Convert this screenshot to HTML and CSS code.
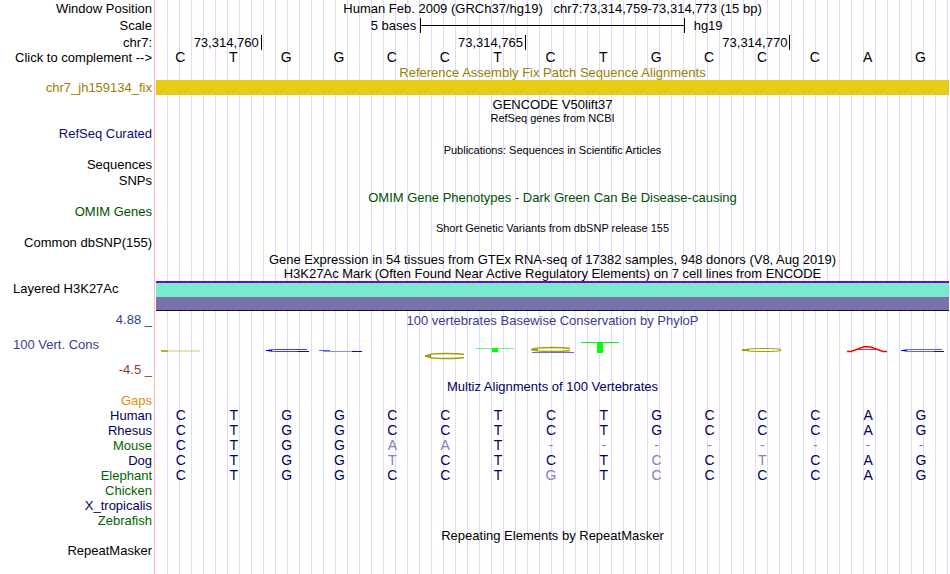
FILE: index.html
```html
<!DOCTYPE html>
<html lang="en">
<head>
    <meta charset="UTF-8">
    <meta name="viewport" content="width=device-width, initial-scale=1.0">
    <title>chr7:73,314,759-73,314,773</title>
    <link rel="stylesheet" href="styles.css">
</head>
<body>
    <main class="browser">
        <!-- Position and ruler -->
        <div class="row">
            <div class="label">Window Position</div>
            <div class="position">Human Feb. 2009 (GRCh37/hg19) &nbsp; chr7:73,314,759-73,314,773 (15 bp)</div>
        </div>
        <div class="row scale">
            <div class="label">Scale</div>
            <div class="bases">
                <span class="scale-size">5 bases</span>
                <span class="scale-bar"></span>
                <span class="scale-db">hg19</span>
            </div>
        </div>
        <div class="row">
            <div class="label">chr7:</div>
            <div class="bases">
                <span class="tick first">73,314,760</span>
                <span class="tick">73,314,765</span>
                <span class="tick">73,314,770</span>
            </div>
        </div>
        <div class="row short">
            <div class="label">Click to complement --&gt;</div>
            <div class="bases letters">
                <span>C</span><span>T</span><span>G</span><span>G</span><span>C</span><span>C</span><span>T</span><span>C</span><span>T</span><span>G</span><span>C</span><span>C</span><span>C</span><span>A</span><span>G</span>
            </div>
        </div>

        <!-- Fix patches -->
        <div class="row short patch"><div class="title">Reference Assembly Fix Patch Sequence Alignments</div></div>
        <div class="row short patch">
            <div class="label">chr7_jh159134_fix</div>
            <div class="patch-bar"></div>
        </div>

        <!-- Genes and publications -->
        <div class="row"><div class="title">GENCODE V50lift37</div></div>
        <div class="row short"><div class="title small">RefSeq genes from NCBI</div></div>
        <div class="row short refseq"><div class="label">RefSeq Curated</div></div>
        <div class="row"><div class="title small">Publications: Sequences in Scientific Articles</div></div>
        <div class="row short"><div class="label">Sequences</div></div>
        <div class="row"><div class="label">SNPs</div></div>
        <div class="row omim"><div class="title">OMIM Gene Phenotypes - Dark Green Can Be Disease-causing</div></div>
        <div class="row short omim"><div class="label">OMIM Genes</div></div>
        <div class="row"><div class="title small">Short Genetic Variants from dbSNP release 155</div></div>
        <div class="row short"><div class="label">Common dbSNP(155)</div></div>
        <div class="row"><div class="title">Gene Expression in 54 tissues from GTEx RNA-seq of 17382 samples, 948 donors (V8, Aug 2019)</div></div>

        <!-- H3K27Ac -->
        <div class="row short"><div class="title">H3K27Ac Mark (Often Found Near Active Regulatory Elements) on 7 cell lines from ENCODE</div></div>
        <div class="row signal">
            <div class="label left">Layered H3K27Ac</div>
            <div class="signal-bar"></div>
        </div>

        <!-- Conservation -->
        <div class="row phylop">
            <div class="axis">
                <span class="max">4.88 _</span>
                <span class="name">100 Vert. Cons</span>
                <span class="min">-4.5 _</span>
            </div>
            <div class="plot">
                <div class="title">100 vertebrates Basewise Conservation by PhyloP</div>
                <svg class="marks" viewBox="0 0 793 30" preserveAspectRatio="none" aria-hidden="true">
                    <!-- yellow -->
                    <g fill="none" stroke="#a0a000">
                        <path d="M5 16H44" stroke="#c8c864"/>
                        <path d="M5 16H12" stroke="#b4b432" stroke-width="2"/>
                        <path d="M308 19.5Q302 18.500 290 18.500Q271 18.500 271 21Q271 23.500 290 23.500Q302 23.500 308 22.500" stroke-width="1.500"/>
                        <path d="M269 21H275" stroke-width="2"/>
                        <path d="M414 13.500Q408 12.500 396 12.500Q377 12.500 377 14.500Q377 16.500 396 16.500Q408 16.500 414 15.500" stroke-width="1.500"/>
                        <path d="M375 14.500H382" stroke-width="2"/>
                        <path d="M625 14.500Q622 13.500 608 13.500Q590 13.500 588 15Q590 16.500 608 16.500Q622 16.500 625 15.500"/>
                        <path d="M586 15H593" stroke-width="2"/>
                    </g>
                    <!-- blue -->
                    <g fill="none" stroke="#0000ff">
                        <path d="M151 14.500H122Q112 14.500 112 15.500Q112 16.500 124 16.500H142" stroke="#3c3cff"/>
                        <path d="M110 15.500H116M142 16.500H153"/>
                        <path d="M163 15.500H174" stroke="#5a5aff"/>
                        <path d="M167 16.500H200" stroke="#8c8cff"/>
                        <path d="M196 16.500H206"/>
                        <path d="M376 17.500H418" stroke="#6464ff"/>
                        <path d="M786 14.500H757Q747 14.500 747 15.500Q747 16.500 759 16.500H778" stroke="#5a5aff"/>
                        <path d="M745 15.500H751M778 16.500H788"/>
                    </g>
                    <!-- green -->
                    <g fill="#00ff00">
                        <rect x="320" y="13" width="38" height="1" opacity="0.6"/>
                        <rect x="336" y="13" width="6" height="4"/>
                        <rect x="425" y="7" width="38" height="1"/>
                        <rect x="441" y="7" width="6" height="11"/>
                    </g>
                    <!-- red -->
                    <g fill="none" stroke="#ff0000">
                        <path d="M691 16.500H695L708 11.800H714L727 16.500H731" stroke-width="1.500"/>
                        <path d="M702 14.500H720" stroke-width="0.800"/>
                    </g>
                </svg>
            </div>
        </div>

        <!-- Multiz alignment -->
        <div class="row short multiz"><div class="title">Multiz Alignments of 100 Vertebrates</div></div>
        <table class="alignment">
            <tr class="gaps"><th>Gaps</th><td colspan="15"></td></tr>
            <tr><th>Human</th><td>C</td><td>T</td><td>G</td><td>G</td><td>C</td><td>C</td><td>T</td><td>C</td><td>T</td><td>G</td><td>C</td><td>C</td><td>C</td><td>A</td><td>G</td></tr>
            <tr><th>Rhesus</th><td>C</td><td>T</td><td>G</td><td>G</td><td>C</td><td>C</td><td>T</td><td>C</td><td>T</td><td>G</td><td>C</td><td>C</td><td>C</td><td>A</td><td>G</td></tr>
            <tr class="alt"><th>Mouse</th><td>C</td><td>T</td><td>G</td><td>G</td><td class="diff">A</td><td class="diff">A</td><td>T</td><td class="diff">-</td><td class="diff">-</td><td class="diff">-</td><td class="diff">-</td><td class="diff">-</td><td class="diff">-</td><td class="diff">-</td><td class="diff">-</td></tr>
            <tr><th>Dog</th><td>C</td><td>T</td><td>G</td><td>G</td><td class="diff">T</td><td>C</td><td>T</td><td>C</td><td>T</td><td class="diff">C</td><td>C</td><td class="diff">T</td><td>C</td><td>A</td><td>G</td></tr>
            <tr class="alt"><th>Elephant</th><td>C</td><td>T</td><td>G</td><td>G</td><td>C</td><td>C</td><td>T</td><td class="diff">G</td><td>T</td><td class="diff">C</td><td>C</td><td>C</td><td>C</td><td>A</td><td>G</td></tr>
            <tr class="alt"><th>Chicken</th><td colspan="15"></td></tr>
            <tr><th>X_tropicalis</th><td colspan="15"></td></tr>
            <tr class="alt"><th>Zebrafish</th><td colspan="15"></td></tr>
        </table>

        <!-- Repeats -->
        <div class="row short"><div class="title">Repeating Elements by RepeatMasker</div></div>
        <div class="row short"><div class="label">RepeatMasker</div></div>
    </main>
</body>
</html>
```

FILE: styles.css
```css
body {
    margin: 0;
    background-color: #fff;
    color: #000;
    font-family: "Liberation Sans", Arial, Helvetica, sans-serif;
    font-size: 13px;
    line-height: 15px;
}

.browser {
    box-sizing: border-box;
    min-height: 100vh;
    padding-right: 1px;
    background-image:
        linear-gradient(#ffb4b4, #ffb4b4),
        repeating-linear-gradient(to right, transparent 0 11px, #dcdcff 11px 12px);
    background-position: 154px 0, 156px 0;
    background-size: 1px 100%, 100% 100%;
    background-repeat: no-repeat;
}

.row {
    display: grid;
    grid-template-columns: 152px 1fr;
    column-gap: 4px;
    height: 16px;
    align-items: center;
    white-space: nowrap;
}

.scale {
    height: 18px;
}

.short {
    height: 15px;
}

.label {
    text-align: right;
}

.left {
    padding-left: 13px;
    text-align: left;
}

.title {
    grid-column: 2;
    padding-top: 2px;
    text-align: center;
}

.short .title {
    padding-top: 0;
}

.position {
    text-align: center;
}

.small {
    font-size: 11px;
}

/* one column per base */
.bases {
    display: grid;
    grid-template-columns: repeat(15, 1fr);
    align-items: center;
}

.letters {
    margin: 0 2px 0 -2px;
    text-align: center;
    font-size: 14px;
}

.scale-size {
    grid-column: span 5;
    padding-right: 4px;
    text-align: right;
}

.scale-bar {
    grid-column: span 5;
    height: 15px;
    border: solid #000;
    border-width: 0 1px;
    background: linear-gradient(#000, #000) center / 100% 1px no-repeat;
}

.scale-db {
    grid-column: span 5;
    padding-left: 9px;
}

.tick {
    grid-column: span 5;
    padding-right: 2px;
    border-right: 1px solid #000;
    text-align: right;
}

.first {
    grid-column: span 2;
}

.patch {
    color: #968200;
}

.patch-bar {
    height: 15px;
    background-color: #e6cb17;
}

.refseq {
    color: #0c0c78;
}

.omim {
    color: #005000;
}

.signal {
    height: 30px;
    align-items: start;
}

.signal-bar {
    box-sizing: border-box;
    height: 30px;
    border-top: 2px solid #7800c8;
    border-bottom: 1px solid #141428;
    background: linear-gradient(#78ebcd 14px, #7873aa 14px);
}

.phylop {
    height: 68px;
    align-items: stretch;
    color: #3c3c8c;
}

.axis {
    display: flex;
    flex-direction: column;
    justify-content: space-between;
    padding: 1px 0 2px;
    text-align: right;
}

.name {
    padding-left: 13px;
    text-align: left;
}

.min {
    color: #8c3c3c;
}

.marks {
    display: block;
    width: 100%;
    height: 30px;
    margin-top: 7px;
}

.multiz,
.alignment {
    color: #000064;
}

.alignment {
    width: 100%;
    table-layout: fixed;
    border-collapse: collapse;
}

.alignment th {
    width: 152px;
    height: 15px;
    padding: 0 4px 0 0;
    font-weight: normal;
    text-align: right;
}

.alignment td {
    padding: 0 3px 0 0;
    font-size: 14px;
    text-align: center;
}

.alignment .diff {
    color: #8282b4;
}

.alt th {
    color: #006400;
}

.alignment .gaps th {
    height: 14px;
    line-height: 14px;
    color: #e68c0a;
}
```
